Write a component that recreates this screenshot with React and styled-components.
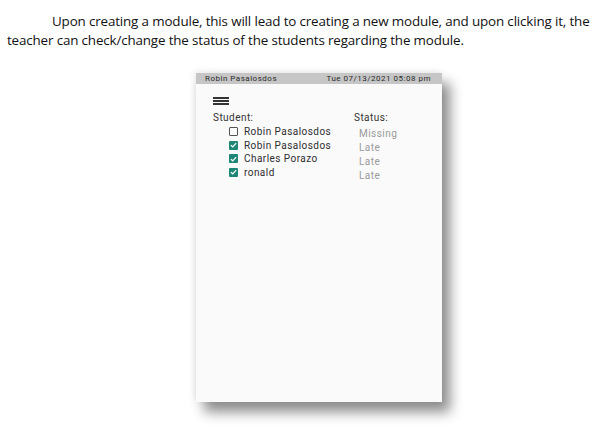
import React from 'react';
import styled, { createGlobalStyle } from 'styled-components';

const Global = createGlobalStyle`
  html, body { margin: 0; padding: 0; background: #fff; }
  body { width: 596px; height: 435px; overflow: hidden; }
`;

const Page = styled.div`
  width: 596px;
  height: 435px;
  display: flex;
  flex-direction: column;
  background: #fff;
`;

const Para = styled.p`
  margin: 12px 0 0 7px;
  font-family: "Open Sans", "Liberation Sans", sans-serif;
  font-size: 13.4px;
  line-height: 19px;
  color: #111;
  letter-spacing: -0.15px;
  white-space: nowrap;
`;

const Indent = styled.span`
  display: inline-block;
  width: 45px;
`;

const Phone = styled.div`
  margin: 23px 0 0 196px;
  width: 246px;
  height: 329px;
  background: #fafafa;
  display: flex;
  flex-direction: column;
  box-shadow: 8px 10px 12px rgba(0, 0, 0, 0.45), -2px -2px 6px rgba(0, 0, 0, 0.08);
  font-family: Roboto, "Liberation Sans", sans-serif;
`;

const TopBar = styled.div`
  height: 11px;
  background: #c6c6c6;
  display: flex;
  align-items: center;
  justify-content: space-between;
  padding: 0 11px 0 9px;
  font-size: 8px;
  letter-spacing: 0.5px;
  color: #2a2a2a;
`;

const Menu = styled.div`
  margin: 13px 0 0 17px;
  width: 16px;
  display: flex;
  flex-direction: column;
  gap: 1.5px;
`;

const MenuLine = styled.div`
  height: 1.5px;
  background: #333;
`;

const Columns = styled.div`
  margin: 6px 0 0 17px;
  display: flex;
  font-size: 10px;
  letter-spacing: 0.45px;
`;

const StudentCol = styled.div`
  width: 141px;
  display: flex;
  flex-direction: column;
`;

const StatusCol = styled.div`
  display: flex;
  flex-direction: column;
`;

const Head = styled.div`
  color: #333;
  height: 14px;
  line-height: 14px;
`;

const Row = styled.div`
  display: flex;
  align-items: center;
  gap: 6px;
  height: 13.7px;
  padding-left: 16px;
  color: #2e2e2e;
`;

const Box = styled.span`
  width: 9px;
  height: 9px;
  box-sizing: border-box;
  border-radius: 1px;
  display: flex;
  align-items: center;
  justify-content: center;
  border: ${p => (p.checked ? 'none' : '1px solid #555')};
  background: ${p => (p.checked ? '#1e8676' : 'transparent')};
`;

const Status = styled.div`
  color: #9a9a9a;
  height: 14px;
  line-height: 14px;
  padding-left: 5px;
  ${p => p.first && 'margin-top: 2px;'}
`;

const students = [
  { name: 'Robin Pasalosdos', checked: false, status: 'Missing' },
  { name: 'Robin Pasalosdos', checked: true, status: 'Late' },
  { name: 'Charles Porazo', checked: true, status: 'Late' },
  { name: 'ronald', checked: true, status: 'Late' },
];

const Check = () => (
  <svg width="7" height="6" viewBox="0 0 7 6">
    <path d="M0.8 3.1 L2.7 4.8 L6.2 1.2" fill="none" stroke="#fff" strokeWidth="1.2" />
  </svg>
);

export default function App() {
  return (
    <Page>
      <Global />
      <Para>
        <Indent />Upon creating a module, this will lead to creating a new module, and upon clicking it, the
        <br />
        teacher can check/change the status of the students regarding the module.
      </Para>
      <Phone>
        <TopBar>
          <span>Robin Pasalosdos</span>
          <span>Tue 07/13/2021 05:08 pm</span>
        </TopBar>
        <Menu>
          <MenuLine />
          <MenuLine />
          <MenuLine />
        </Menu>
        <Columns>
          <StudentCol>
            <Head>Student:</Head>
            {students.map((s, i) => (
              <Row key={i}>
                <Box checked={s.checked}>{s.checked && <Check />}</Box>
                {s.name}
              </Row>
            ))}
          </StudentCol>
          <StatusCol>
            <Head>Status:</Head>
            {students.map((s, i) => (
              <Status key={i} first={i === 0}>{s.status}</Status>
            ))}
          </StatusCol>
        </Columns>
      </Phone>
    </Page>
  );
}
